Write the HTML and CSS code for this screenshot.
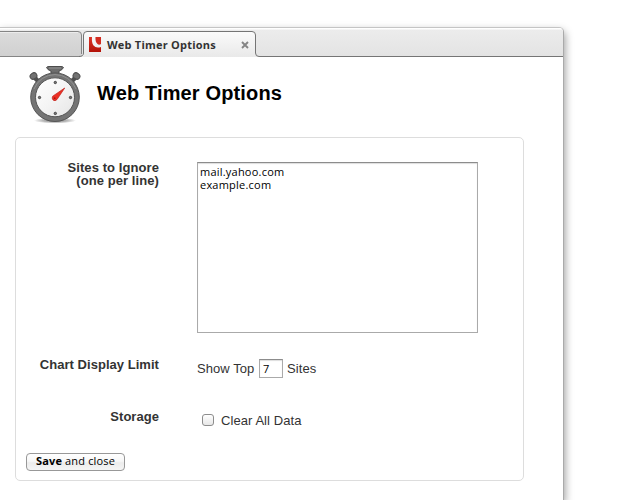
FILE: index.html
```html
<!DOCTYPE html>
<html lang="en">
<head>
<meta charset="utf-8">
<title>Web Timer Options</title>
<link rel="stylesheet" href="styles.css">
</head>
<body>
<div class="window">
  <div class="tabstrip">
    <svg class="tab-shapes" width="563" height="29" viewBox="0 28 563 29">
      <defs>
        <linearGradient id="idle" x1="0" y1="0" x2="0" y2="1"><stop offset="0" stop-color="#dcdcdc"/><stop offset="1" stop-color="#d0d0d0"/></linearGradient>
        <linearGradient id="active" x1="0" y1="0" x2="0" y2="1"><stop offset="0" stop-color="#fbfbfb"/><stop offset="1" stop-color="#e9e9e9"/></linearGradient>
      </defs>
      <path d="M0 31.500H78Q81.500 31.500 81.500 35V53Q81.500 56.500 84 56.500H0Z" fill="url(#idle)"/>
      <path d="M0 32.500H78" stroke="#ececec"/>
      <path d="M0 31.500H78Q81.500 31.500 81.500 35V54M0 56.500H80" fill="none" stroke="#858585"/>
      <path d="M80 57Q83.500 56.500 83.500 53V35Q83.500 31.500 87 31.500H252Q255.500 31.500 255.500 35V53Q255.500 56.500 259 57Z" fill="url(#active)"/>
      <path d="M79 56.500Q83.500 56.500 83.500 53V35Q83.500 31.500 87 31.500H252Q255.500 31.500 255.500 35V53Q255.500 56.500 259 56.500H563" fill="none" stroke="#757575"/>
    </svg>
    <div class="tab">
      <svg class="favicon" width="13" height="15" viewBox="0 0 13 15">
        <defs><linearGradient id="red" x1="0" y1="0" x2="0" y2="1"><stop offset="0" stop-color="#dc3528"/><stop offset="1" stop-color="#b31208"/></linearGradient></defs>
        <path d="M0 0H3Q2.500 6 4.500 8.500Q7 11.500 12 10V15H0Z" fill="url(#red)"/>
        <path d="M6.500 0H12V7Q10 8.500 8.500 7Q6 5 6.500 0Z" fill="#d22b20"/>
      </svg>
      <span class="tab-title">Web Timer Options</span>
      <svg class="close" width="8" height="8" viewBox="0 0 8 8"><path d="M1 1L7 7M7 1L1 7" stroke="#858585" stroke-width="1.900"/></svg>
    </div>
  </div>
  <header class="header">
    <svg class="stopwatch" width="54" height="60" viewBox="28 64 54 60">
      <defs>
        <radialGradient id="shade"><stop offset="0" stop-color="#777"/><stop offset=".6" stop-color="#bbb"/><stop offset="1" stop-color="#fff"/></radialGradient>
        <linearGradient id="dial" x1="0" y1="0" x2="1" y2="1"><stop offset="0" stop-color="#fff"/><stop offset=".5" stop-color="#f4f4f4"/><stop offset="1" stop-color="#e5e5e5"/></linearGradient>
      </defs>
      <ellipse cx="55" cy="120.500" rx="21" ry="3" fill="url(#shade)"/>
      <path d="M33 76L39 82M77 76L71 82" stroke="#505050" stroke-width="4.500"/>
      <ellipse cx="33.500" cy="76" rx="3.600" ry="3" fill="#727272" stroke="#4d4d4d" transform="rotate(-35 33.500 76)"/>
      <ellipse cx="76.500" cy="76" rx="3.600" ry="3" fill="#727272" stroke="#4d4d4d" transform="rotate(35 76.500 76)"/>
      <path d="M46.500 67.500Q47 66.500 49 66.500H61Q63 66.500 63.500 67.500Q62.500 70 59 71V75H51V71Q47.500 70 46.500 67.500Z" fill="#6c6c6c" stroke="#4c4c4c"/>
      <path d="M49 68H61" stroke="#929292"/>
      <circle cx="55" cy="97.200" r="24.300" fill="#747474" stroke="#555"/>
      <path d="M34 89A22.500 22.500 0 0 1 76 89" fill="none" stroke="#919191"/>
      <circle cx="55" cy="97.300" r="19.500" fill="url(#dial)" stroke="#555"/>
      <g fill="#777" stroke="#333" stroke-width=".8"><circle cx="55.300" cy="82.500" r="1.200"/><circle cx="55.300" cy="113.400" r="1.200"/><circle cx="39.500" cy="97.500" r="1.200"/><circle cx="70.500" cy="97.500" r="1.200"/></g>
      <path d="M64.700 88L52.700 96.200Q51.500 98 53 100Q55 101.600 57 99.500Z" fill="#ed3024" stroke="#bf2019" stroke-width=".7"/>
      <circle cx="54.700" cy="98.200" r=".9" fill="#a31410"/>
    </svg>
    <h1>Web Timer Options</h1>
  </header>
  <form class="options">
    <div class="row row-sites">
      <label class="label" for="sites">Sites to Ignore<br>(one per line)</label>
      <textarea id="sites" class="sites" spellcheck="false">mail.yahoo.com
example.com</textarea>
    </div>
    <div class="row row-limit">
      <label class="label" for="limit">Chart Display Limit</label>
      <div class="control"><span class="show">Show Top</span><input id="limit" class="limit" type="text" value="7"><span>Sites</span></div>
    </div>
    <div class="row row-storage">
      <span class="label">Storage</span>
      <label class="control clear"><input class="check" type="checkbox"><span>Clear All Data</span></label>
    </div>
    <button class="save" type="button"><b>Save</b> and close</button>
  </form>
</div>
</body>
</html>
```
FILE: styles.css
```css
* { box-sizing: border-box; }
html { overflow: hidden; background: #fff; }
body { margin: 0; padding-top: 27px; height: 500px; overflow: hidden; font-family: "Liberation Sans", sans-serif; font-size: 13px; color: #333; }
.window { width: 564px; height: 473px; background: #fff; border-top: 1px solid #c5c5c5; border-right: 1px solid #aaa; border-top-right-radius: 5px; box-shadow: 1px 4px 9px rgba(0, 0, 0, .4), 0 30px 0 #fff; }
.tabstrip { position: relative; height: 29px; background: linear-gradient(#fff 0, #fff 1px, #ececec 2px, #e3e3e3 100%); border-top-right-radius: 4px; }
.tab-shapes { position: absolute; left: 0; top: 0; }
.tab { position: relative; display: flex; align-items: center; width: 173px; height: 29px; margin-left: 83px; padding: 5px 7px 0 6px; }
.favicon { flex: none; margin-top: -2px; }
.tab-title { margin: -2px 0 0 5px; font: bold 11px/15px "Open Sans", sans-serif; letter-spacing: .22px; white-space: nowrap; }
.close { margin-left: auto; }
.header { display: flex; height: 80px; padding: 7px 0 0 28px; }
h1 { margin: 17px 0 0 15px; font-size: 20px; line-height: 24px; letter-spacing: .14px; color: #000; white-space: nowrap; }
.options { width: 509px; height: 344px; margin-left: 15px; padding: 24px 10px 0; border: 1px solid #ddd; border-radius: 5px; }
.row { display: grid; grid-template-columns: 133px 1fr; column-gap: 38px; align-items: start; }
.row-sites { height: 196px; }
.row-limit { height: 52px; }
.row-storage { height: 43px; }
.label { text-align: right; font-weight: bold; line-height: 13px; letter-spacing: .04px; white-space: nowrap; }
.row-sites .label { margin-top: -1px; letter-spacing: .08px; }
.sites { display: block; width: 281px; height: 171px; margin: 0; padding: 2px; border: 1px solid #aaa; border-top-color: #8c8c8c; border-radius: 0; outline: 0; resize: none; overflow: hidden; box-shadow: inset 0 1px 1px #ddd; color: #000; font: 11px/13px "Open Sans", sans-serif; letter-spacing: .22px; }
.control { display: flex; align-items: center; height: 20px; letter-spacing: .07px; white-space: nowrap; }
.show { width: 62px; }
.limit { width: 24px; height: 19px; margin: 0 4px 0 0; padding: 1px 3px; border: 1px solid #aaa; border-top-color: #8c8c8c; border-radius: 0; box-shadow: inset 0 1px 1px #ddd; font: 11px "Open Sans", sans-serif; color: #000; }
.clear { padding-left: 5px; }
.check { appearance: none; width: 12px; height: 12px; margin: 0 7px 0 0; border: 1px solid #8d8d8d; border-radius: 3px; background: linear-gradient(#fff, #e7e7e7); }
.save { display: block; width: 99px; height: 18px; padding: 0 0 2px; border: 1px solid #989898; border-radius: 4px; background: linear-gradient(#fff 0, #f7f7f7 45%, #ececec 55%, #f5f5f5 100%); font: 11px/14px "Open Sans", sans-serif; letter-spacing: .15px; color: #000; white-space: nowrap; }
```
